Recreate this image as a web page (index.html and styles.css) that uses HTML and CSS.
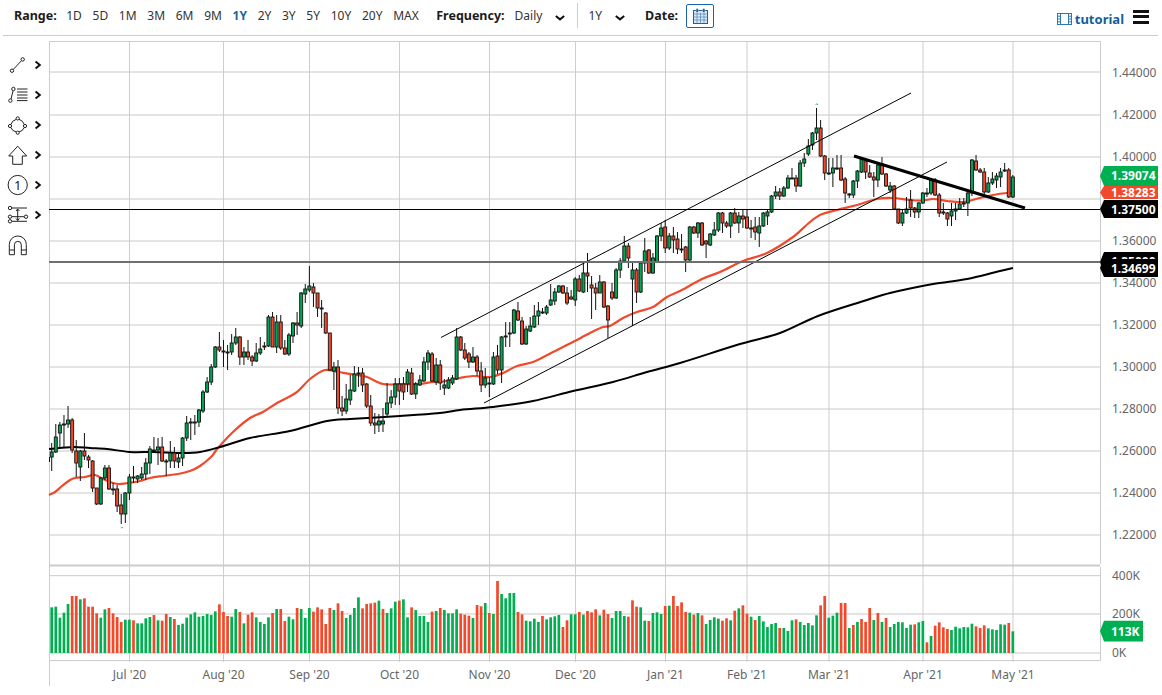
FILE: index.html
```html
<!DOCTYPE html>
<html lang="en">
<head>
<meta charset="utf-8">
<title>Chart</title>
<link rel="stylesheet" href="styles.css">
</head>
<body>
<header class="toolbar">
  <div class="group ranges">
    <span class="label">Range:</span>
    <span class="opt">1D</span><span class="opt">5D</span><span class="opt">1M</span><span class="opt">3M</span><span class="opt">6M</span><span class="opt">9M</span><span class="opt active">1Y</span><span class="opt">2Y</span><span class="opt">3Y</span><span class="opt">5Y</span><span class="opt">10Y</span><span class="opt">20Y</span><span class="opt">MAX</span>
  </div>
  <div class="group freq">
    <span class="label">Frequency:</span>
    <span class="opt">Daily</span>
    <svg class="chev" viewBox="0 0 10 6"><path d="M0.8 1 L5 4.4 L9.2 1"/></svg>
  </div>
  <div class="vsep"></div>
  <div class="group period">
    <span class="opt">1Y</span>
    <svg class="chev" viewBox="0 0 10 6"><path d="M0.8 1 L5 4.4 L9.2 1"/></svg>
  </div>
  <div class="group date">
    <span class="label">Date:</span>
    <button class="calbtn" type="button">
      <svg class="cal" viewBox="0 0 15 16">
        <rect class="calfill" x="0.5" y="2.5" width="14" height="13"/>
        <path class="calgrid" d="M0.5 6H14.5M0.5 9H14.5M0.5 12H14.5M4 5V15.5M7.5 5V15.5M11 5V15.5"/>
        <rect class="calring" x="3" y="0.5" width="2.4" height="4" rx="1"/>
        <rect class="calring" x="9.6" y="0.5" width="2.4" height="4" rx="1"/>
      </svg>
    </button>
  </div>
  <div class="spring"></div>
  <a class="tutorial">
    <svg class="film" viewBox="0 0 15 12">
      <rect x="0.5" y="0.5" width="14" height="11"/>
      <path d="M3.5 0.5V11.5M11.5 0.5V11.5M0.5 3.2H3.5M0.5 6H3.5M0.5 8.8H3.5M11.5 3.2H14.5M11.5 6H14.5M11.5 8.8H14.5"/>
    </svg>
    <span>tutorial</span>
  </a>
  <div class="burger"><i></i><i></i><i></i></div>
</header>

<main class="stage">
  <nav class="rail">
    <div class="tool">
      <svg class="ticon" viewBox="6 53 24 24"><path d="M13.3 69.4L21.4 60.8"/><circle cx="12" cy="70.7" r="1.7"/><circle cx="22.7" cy="59.4" r="1.7"/></svg>
      <svg class="tchev" viewBox="0 0 8 12"><path d="M1.6 2.4L5.8 6L1.6 9.6"/></svg>
    </div>
    <div class="tool">
      <svg class="ticon" viewBox="6 84 24 24"><path d="M13 92L11 100"/><circle cx="13.4" cy="90" r="1.7"/><circle cx="10.4" cy="101.6" r="1.7"/><path d="M17 90H27.5M17 93H27.5M17 96H27.5M17 99H27.5M17 101.6H27.5"/></svg>
      <svg class="tchev" viewBox="0 0 8 12"><path d="M1.6 2.4L5.8 6L1.6 9.6"/></svg>
    </div>
    <div class="tool">
      <svg class="ticon" viewBox="6 113 24 24"><path d="M16.3 119.3Q12 120.5 10.9 124.5M19 119.3Q23 120.5 24.3 124.5M24.3 127.6Q23 131 19 132M16.4 132Q12 131 10.9 127.5"/><circle cx="17.7" cy="118.4" r="1.6"/><circle cx="25" cy="126" r="1.6"/><circle cx="17.7" cy="132.7" r="1.6"/><circle cx="10" cy="126" r="1.6"/></svg>
      <svg class="tchev" viewBox="0 0 8 12"><path d="M1.6 2.4L5.8 6L1.6 9.6"/></svg>
    </div>
    <div class="tool">
      <svg class="ticon" viewBox="6 143 24 24"><path d="M17.7 146.2L26.7 156H22.3V164.3H12.7V156H8.7Z"/></svg>
      <svg class="tchev" viewBox="0 0 8 12"><path d="M1.6 2.4L5.8 6L1.6 9.6"/></svg>
    </div>
    <div class="tool">
      <svg class="ticon" viewBox="6 173 24 24"><circle cx="17.7" cy="185" r="9.6"/><text class="one" x="17.7" y="189.6">1</text></svg>
      <svg class="tchev" viewBox="0 0 8 12"><path d="M1.6 2.4L5.8 6L1.6 9.6"/></svg>
    </div>
    <div class="tool">
      <svg class="ticon" viewBox="6 203 24 24"><path d="M12 208H27M12 216.7H24M12 221.3H27"/><circle cx="10" cy="208" r="1.7"/><circle cx="10" cy="216.7" r="1.7"/><circle cx="10" cy="221.3" r="1.7"/><circle cx="26" cy="216.7" r="1.7"/><path d="M17.7 209V220.5M16 211L17.7 209L19.4 211M16 218.5L17.7 220.5L19.4 218.5"/></svg>
      <svg class="tchev" viewBox="0 0 8 12"><path d="M1.6 2.4L5.8 6L1.6 9.6"/></svg>
    </div>
    <div class="tool">
      <svg class="ticon" viewBox="6 233 24 24"><path d="M9.3 254.7V244.5A8.4 8.4 0 0 1 26.3 244.5V254.7H21.3V244.8A3.4 3.4 0 0 0 14.4 244.8V254.7ZM9.3 250H14.4M21.3 250H26.3"/></svg>
    </div>
  </nav>

  <svg class="chart" viewBox="48 36 1114 659" width="1114" height="659">
    <defs><clipPath id="plot"><rect x="49" y="41" width="1051" height="620"/></clipPath></defs>

    <path class="hgrid" d="M49 72H1100M49 115H1100M49 157H1100M49 199H1100M49 241H1100M49 283H1100M49 325H1100M49 367H1100M49 409H1100M49 451H1100M49 493H1100M49 535H1100M49 575.7H1100M49 614H1100M49 653H1100"/>
    <path class="vgrid" d="M129.5 41V662M223.5 41V662M309.5 41V662M399.5 41V662M489.5 41V662M575.5 41V662M665.5 41V662M747 41V662M829 41V662M923 41V662M1013 41V662"/>
    <path class="axis" d="M49.5 41.5H1100.5V564M1100.5 567V660.5H49M49.5 41.5V686"/>
    <path class="paneSep" d="M49 565.5H1100"/>

    <g id="volumes" clip-path="url(#plot)"></g>

    <path class="ma red" id="maRed"/>
    <path class="ma black" id="maBlack"/>

    <g id="candles" clip-path="url(#plot)"></g>
    <path class="wick" d="M49.5 457V462"/>

    <line class="trend" x1="441" y1="337.5" x2="911" y2="93"/>
    <line class="trend" x1="484" y1="403" x2="947" y2="162"/>
    <line class="trend thick" x1="854" y1="156" x2="1025" y2="208"/>
    <line class="hline" x1="49" y1="209.5" x2="1100" y2="209.5"/>
    <line class="hline gray" x1="49" y1="262" x2="1100" y2="262"/>

    <path class="hilo g" d="M815.6 105L816.8 103.6L818 105"/>
    <path class="hilo r" d="M120.8 527L122 528.2L123.2 527"/>

    <g class="ylabels">
      <text x="1112" y="76.5">1.44000</text>
      <text x="1112" y="119">1.42000</text>
      <text x="1112" y="161">1.40000</text>
      <text x="1112" y="245">1.36000</text>
      <text x="1112" y="287">1.34000</text>
      <text x="1112" y="329">1.32000</text>
      <text x="1112" y="371">1.30000</text>
      <text x="1112" y="413">1.28000</text>
      <text x="1112" y="455">1.26000</text>
      <text x="1112" y="497">1.24000</text>
      <text x="1112" y="539">1.22000</text>
      <text x="1112" y="579.5">400K</text>
      <text x="1112" y="618">200K</text>
      <text x="1112" y="657">0K</text>
    </g>

    <g class="xlabels">
      <text x="129.5" y="679">Jul '20</text>
      <text x="223.5" y="679">Aug '20</text>
      <text x="309.5" y="679">Sep '20</text>
      <text x="399.5" y="679">Oct '20</text>
      <text x="489.5" y="679">Nov '20</text>
      <text x="575.5" y="679">Dec '20</text>
      <text x="665.5" y="679">Jan '21</text>
      <text x="747" y="679">Feb '21</text>
      <text x="829" y="679">Mar '21</text>
      <text x="923" y="679">Apr '21</text>
      <text x="1013" y="679">May '21</text>
    </g>

    <g class="badges">
      <polygon class="bgreen" points="1100,176 1104,166 1158,166 1158,186 1104,186"/>
      <text x="1111" y="180">1.39074</text>
      <polygon class="bred" points="1100,192.5 1104,186 1158,186 1158,199 1104,199"/>
      <text x="1111" y="197">1.38283</text>
      <polygon class="bblack" points="1100,209 1104,200 1158,200 1158,218 1104,218"/>
      <text x="1111" y="213.5">1.37500</text>
      <polygon class="bblack" points="1100,262 1104,252 1158,252 1158,272 1104,272"/>
      <text x="1111" y="265.5">1.35000</text>
      <polygon class="bblack" points="1100,268 1104,259 1158,259 1158,277 1104,277"/>
      <text x="1111" y="272.5">1.34699</text>
      <polygon class="bgreen" points="1100,631 1104,620.7 1143,620.7 1143,641.5 1104,641.5"/>
      <text x="1111" y="635.5">113K</text>
    </g>
  </svg>
</main>
<script src="script.js"></script>
</body>
</html>
```
FILE: styles.css
```css
* { box-sizing: border-box; }
html, body { margin: 0; padding: 0; background: #fff; }
body {
  width: 1162px;
  height: 695px;
  overflow: hidden;
  font-family: "Noto Sans", "Open Sans", sans-serif;
  color: #222;
}
.toolbar {
  display: flex;
  align-items: center;
  height: 36px;
  margin: 0 4px 0 3px;
  padding: 0 9px 4px 11px;
  border-bottom: 1px solid #ccc;
  font-size: 12px;
}
.group { display: flex; align-items: center; }
.ranges { gap: 10.7px; }
.label { font-weight: 700; font-size: 12.5px; color: #1b1b1b; }
.ranges .label { margin-right: -1.2px; }
.opt { color: #333; }
.opt.active { color: #1a66ad; font-weight: 700; }
.freq { margin-left: 17.5px; gap: 10px; }
.freq .chev { margin-left: 3px; }
.vsep { width: 1px; height: 25px; background: #ccc; margin-left: 12px; }
.period { margin-left: 10px; gap: 13px; }
.date { margin-left: 20px; gap: 8px; }
.chev { width: 10px; height: 6px; margin-top: 4px; }
.chev path { fill: none; stroke: #111; stroke-width: 2; }
.calbtn {
  display: flex;
  align-items: center;
  justify-content: center;
  width: 28px;
  height: 24px;
  padding: 0;
  background: #fff;
  border: 1px solid #1a66ad;
  border-radius: 2px;
}
.cal { width: 15px; height: 16px; }
.calfill { fill: #dbe8f4; stroke: #1a5f9e; stroke-width: 1; }
.calgrid { fill: none; stroke: #4c86bb; stroke-width: 0.7; }
.calring { fill: #1a5f9e; stroke: #fff; stroke-width: 0.4; }
.spring { flex: 1; }
.tutorial {
  display: flex;
  align-items: center;
  gap: 3px;
  margin-top: 6px;
  color: #14609a;
  font-weight: 700;
  font-size: 13px;
}
.film { width: 15px; height: 12px; }
.film rect { fill: none; stroke: #2b78b5; stroke-width: 1; }
.film path { fill: none; stroke: #2b78b5; stroke-width: 1; }
.burger { display: flex; flex-direction: column; gap: 2.5px; margin-left: 9px; margin-top: 2px; }
.burger i { display: block; width: 16px; height: 3px; background: #111; }

.stage { display: flex; }
.rail {
  display: flex;
  flex-direction: column;
  width: 48px;
  padding-top: 14px;
  flex: none;
}
.tool {
  display: flex;
  align-items: center;
  gap: 4px;
  height: 30px;
  padding-left: 6px;
}
.ticon { width: 24px; height: 24px; flex: none; }
.ticon path, .ticon circle { fill: none; stroke: #222; stroke-width: 1; }
.tchev { width: 8px; height: 12px; flex: none; }
.tchev path { fill: none; stroke: #111; stroke-width: 2; }
.one { font-size: 13px; fill: #222; text-anchor: middle; }

.chart { display: block; flex: none; }
.hgrid { fill: none; stroke: #c8c8c8; stroke-width: 1; }
.vgrid { fill: none; stroke: #cdcdcd; stroke-width: 1; }
.axis { fill: none; stroke: #ccc; stroke-width: 1; }
.paneSep { fill: none; stroke: #ccc; stroke-width: 2; }
.ma { fill: none; stroke-width: 2; stroke-linejoin: round; }
.ma.red { stroke: #f0492b; stroke-width: 2.2; }
.ma.black { stroke: #000; }
.wick { fill: none; stroke: #111; stroke-width: 1; }
.bodyg { fill: #00a651; stroke: #111; stroke-width: 0.9; }
.bodyr { fill: #f0492b; stroke: #111; stroke-width: 0.9; }
.volg { fill: #00b050; }
.volr { fill: #f4482a; }
.trend { stroke: #000; stroke-width: 1; }
.trend.thick { stroke-width: 3; }
.hline { stroke: #000; stroke-width: 1; }
.hline.gray { stroke: #6f6f6f; stroke-width: 2; }
.hilo { fill: none; stroke-width: 0.8; }
.hilo.g { stroke: #00b050; }
.hilo.r { stroke: #f0492b; }
.ylabels text { font-size: 12px; fill: #666; }
.xlabels text { font-size: 12px; fill: #666; text-anchor: middle; }
.badges text { font-size: 12px; font-weight: 700; fill: #fff; }
.bgreen { fill: #00b050; }
.bred { fill: #f0492b; }
.bblack { fill: #000; }
```
FILE: script.js
```js
var NS = 'http://www.w3.org/2000/svg';
var X0 = 51.7, STEP = 4.09;

var candles = 'g,443,452,457,471 g,424,437,452,453 g,422,425,433,447 g,415,424,425,447 g,406,420,424,428 r,418,420,450,453 r,440,451,463,477 g,450,451,467,481 r,433,451,456,460 r,455,457,460,468 ' +
'r,460,461,488,492 r,488,488,504,505 g,477,478,504,505 g,465,468,478,480 r,465,468,489,490 r,483,489,490,495 r,485,489,506,512 r,494,505,514,524 g,492,493,514,523 g,474,477,493,500 ' +
'g,466,477,478,483 g,475,476,479,483 g,467,474,478,480 g,458,463,474,480 g,446,449,463,474 g,437,450,450,452 g,438,447,450,465 r,437,447,461,462 r,459,461,461,476 g,441,453,461,468 ' +
'r,447,453,461,468 g,453,458,462,468 g,437,438,458,466 g,416,423,438,441 g,418,422,423,440 g,415,422,423,435 g,409,410,422,427 ' +
'g,390,392,411,413 g,377,382,392,393 g,364,367,382,385 g,346,347,367,368 r,332,347,350,352 r,340,351,351,367 g,345,352,352,370 g,334,343,352,355 g,328,337,343,345 ' +
'r,336,337,357,365 g,347,352,357,365 r,340,352,357,360 r,355,357,361,366 g,343,353,361,362 g,337,349,353,355 r,342,346,346,350 g,315,317,346,347 r,312,317,347,347 g,315,322,347,353 ' +
'r,315,322,348,350 r,340,348,354,355 g,333,335,354,356 g,322,323,336,343 r,312,323,325,335 g,292,293,326,328 g,284,289,294,303 g,266,286,290,292 r,283,287,293,307 r,293,293,308,317 ' +
'r,300,308,308,328 r,312,313,333,334 r,333,333,370,371 g,362,367,371,390 r,360,367,408,414 r,396,408,411,416 g,384,399,411,414 g,375,390,400,405 g,366,374,391,392 r,367,373,373,387 ' +
'r,368,373,385,392 r,383,384,406,408 r,395,406,423,426 r,413,423,425,434 g,414,421,425,432 g,408,421,424,432 g,383,403,414,417 g,390,397,403,408 g,378,384,397,405 r,378,384,391,405 ' +
'r,377,384,392,400 g,369,372,384,392 r,368,373,394,395 g,382,384,394,399 g,375,380,385,386 g,357,362,381,382 g,350,353,362,370 r,352,354,381,382 g,358,365,382,385 ' +
'r,360,365,383,390 g,379,385,388,395 g,377,380,388,389 g,375,378,383,385 g,328,337,379,380 r,336,337,350,351 r,343,350,358,360 r,352,354,362,368 g,347,357,362,363 r,355,357,371,376 ' +
'r,362,371,385,392 g,368,378,385,388 r,377,383,384,397 g,352,357,384,385 r,345,356,370,374 g,336,337,370,383 g,322,336,336,347 g,322,333,333,347 g,309,310,333,334 r,302,311,320,321 ' +
'r,317,321,344,345 g,326,329,344,345 g,317,326,331,332 g,305,316,327,328 g,302,311,316,325 g,308,312,312,314 g,305,307,313,315 g,284,300,305,306 g,288,292,301,305 g,285,286,292,293 ' +
'r,285,286,293,294 r,287,293,303,305 r,290,297,299,300 g,277,279,300,306 r,275,279,291,292 g,262,273,292,293 r,253,273,276,292 r,276,285,288,319 r,283,288,293,310 g,275,282,293,293 ' +
'r,281,282,307,308 r,305,306,320,338 r,283,292,298,300 g,268,270,298,299 g,258,261,270,278 g,236,246,261,262 r,243,246,258,268 g,262,270,279,326 r,268,270,292,303 g,262,263,292,293 ' +
'g,238,251,263,272 r,249,250,273,274 g,253,258,273,274 g,235,236,262,263 g,223,228,236,241 r,220,227,248,253 g,233,236,248,250 r,227,236,240,253 r,232,239,249,254 ' +
'g,234,249,249,253 r,246,247,260,272 g,226,227,260,261 r,226,227,233,234 g,222,223,233,238 r,222,223,245,246 r,240,241,244,258 g,233,234,245,246 g,222,230,235,236 g,212,213,230,232 ' +
'r,212,213,223,233 r,221,223,226,228 g,212,213,226,238 r,208,213,223,224 g,212,216,223,233 r,210,216,219,228 r,209,217,228,229 r,220,228,228,238 r,217,227,232,240 g,217,226,233,247 ' +
'g,212,213,226,227 g,210,212,216,225 g,195,196,212,213 g,186,192,196,199 r,188,192,196,200 g,186,188,196,197 g,175,178,188,189 g,168,178,178,178 r,175,178,186,192 g,160,163,186,187 ' +
'g,153,159,163,167 g,139,146,154,156 g,132,133,145,150 g,108,128,133,140 r,120,128,156,157 r,155,156,173,180 g,158,173,173,175 g,158,168,173,187 r,155,168,168,170 r,155,168,180,181 ' +
'r,177,179,193,203 r,193,194,194,198 g,180,181,195,198 g,170,171,181,188 g,157,159,172,173 r,158,161,172,179 r,165,173,177,178 r,172,177,180,197 g,162,165,180,187 r,157,164,174,175 ' +
'r,173,174,186,187 g,182,186,190,193 r,185,186,209,210 r,209,209,223,224 g,210,213,223,226 g,197,209,213,214 r,190,200,208,217 r,207,208,212,218 g,202,203,212,218 g,192,193,203,204 ' +
'g,188,193,194,197 g,178,180,193,195 r,178,180,195,196 r,193,195,213,217 r,203,212,213,215 r,212,213,219,226 g,203,211,216,226 g,203,209,211,220 g,198,204,209,210 g,198,203,204,207 ' +
'g,190,193,203,216 g,159,160,193,196 r,155,161,170,171 r,168,170,172,173 r,168,172,192,194 g,177,183,192,193 g,172,179,183,185 g,173,176,180,188 g,168,172,177,187 g,163,170,171,172 ' +
'r,168,170,197,198 g,175,177,197,198';

var volA = '35g112 47g110 60g143 72g128 85g102 97r78 110r78 122g88 134r85 147r110 159r110 171r130 183g143 195g118 208r114 220r130 232r141 245r156 257g149 269g149 281r151 294g160 306g160 318g145 331g141 343r135 355g151 367r152 380r132 392g141 404r147 416g165 428g161 441g143 453g133 465g127 478g140 490g138 502g132 514g135 527g124 539r103 551r126 563r138 576g140 588g117 600r126 612g160 625r134 637r127 649g142 662g156 674g162 686g142 698r129 711g117 723r117 735r153 747g140 760g148 772r114 784g117 796g144 809g114 821r125 833r112 845r118 858r162 870r114 882g120 895r100 907r123 919g144 931g135 944g114 956g82 968r115 980r102 992r100 1005r98 1017g92 1029r117 1041g129 1054g115 1066g95 1078r92 1090g88 1103g142 1115r112 1127g120 1140g138 1152g138 1164g156 1176r125 1189g123';
var volB = '1r114 13g120 25g130 38g130 50g118 62r131 74r134 87r137 99g144 111r105 124r109 136g99 148r129 160g132 173r33 185g72 197g85 209g69 222g69 234r126 246r133 259g152 271g154 283g146 295g156 308r138 320g148 332g142 344g139 357g135 369r171 381r151 394g133 406g133 418r126 430g134 443r123 455r127 467r118 479g136 492r119 504r132 516g144 528g123 541g123 553g138 565r140 577r91 590r110 602g112 614g152 627r153 639g129 651g127 663g132 676r108 688g107 700r78 713r108 725r97 737r126 749g128 761r134 774g129 786r136 798g162 810g150 823g142 835g146 847r152 859r145 871g151 884r122 896g115 908r106 921r131 933g140 945r150 957g138 970g154 982g171 994g162 1006g159 1019r174 1031g174 1043g183 1056g151 1068r148 1080g156 1092g165 1105g159 1117g166 1129g136 1141r106 1154r78 1166g143 1178g137 1190g128';
var volC = '7g217 19g234 31g224 44r223 56g217 68g213 81r277 93g258 105r227 118r217 130r232 142r237 154g240 167g230 179g235 191g231 204g232 216g221 228r229 240r234 253r226 265g235 277g238 289g240 302g223 314g224 326r219 339g244';
var volD = [['r',603],['r',603],['g',628],['r',625],['g',622],['r',619],['r',622],['r',608],['g',620],['r',613],['g',622],['r',618],['g',627],['g',624],['g',622]];

var redLine = [[49,495],[55,492],[62,486],[70,480],[75,478],[85,477],[95,475],[103,479],[110,482],[118,484],[128,483],[140,481],[150,478],[163,476],[178,474],[190,471],[200,466],[212,456],[217,449],[233,432],[250,418],[263,412],[277,403],[297,392],[310,379],[325,370],[338,372],[357,375],[367,377],[383,384],[400,384],[420,384],[433,382],[440,382],[460,378],[473,376],[490,377],[503,373],[517,366],[533,362],[553,352],[573,342],[590,333],[603,327],[610,326],[623,318],[637,312],[653,307],[667,297],[680,291],[702,279],[720,272],[743,261],[767,253],[793,237],[810,222],[820,215],[837,210],[857,205],[877,199],[893,198],[910,200],[923,200.5],[933,199],[947,201],[963,202],[980,198],[993,195],[1007,193],[1013,193]];
var blackLine = [[49,449],[73,447],[90,448],[107,449],[130,452],[153,452],[183,453],[200,452],[220,447],[250,438],[290,431],[327,421],[350,419],[400,416],[440,413],[460,410],[493,407],[533,401],[573,391],[613,382],[647,372],[680,363],[740,344],[780,333],[818,316],[867,300],[890,293],[933,284],[967,279],[1000,271],[1013,268]];

function smooth(pts) {
  var d = 'M' + pts[0][0] + ' ' + pts[0][1];
  for (var i = 0; i < pts.length - 1; i++) {
    var p0 = pts[Math.max(i - 1, 0)], p1 = pts[i], p2 = pts[i + 1], p3 = pts[Math.min(i + 2, pts.length - 1)];
    var h = (p2[0] - p1[0]);
    var m1 = (p2[1] - p0[1]) / ((p2[0] - p0[0]) || 1);
    var m2 = (p3[1] - p1[1]) / ((p3[0] - p1[0]) || 1);
    d += 'C' + (p1[0] + h / 3) + ' ' + (p1[1] + m1 * h / 3) + ' ' + (p2[0] - h / 3) + ' ' + (p2[1] - m2 * h / 3) + ' ' + p2[0] + ' ' + p2[1];
  }
  return d;
}
document.getElementById('maRed').setAttribute('d', smooth(redLine));
document.getElementById('maBlack').setAttribute('d', smooth(blackLine));

function el(name, attrs, parent) {
  var n = document.createElementNS(NS, name);
  for (var k in attrs) n.setAttribute(k, attrs[k]);
  parent.appendChild(n);
  return n;
}

var cg = document.getElementById('candles');
candles.split(' ').forEach(function (tok, i) {
  var p = tok.split(',');
  var x = X0 + STEP * i;
  var hi = +p[1], top = +p[2], bot = +p[3], lo = +p[4];
  el('line', { 'class': 'wick', x1: x, x2: x, y1: hi, y2: lo }, cg);
  el('rect', { 'class': p[0] === 'g' ? 'bodyg' : 'bodyr', x: x - 1.5, y: top, width: 3, height: Math.max(bot - top, 1) }, cg);
});

var vg = document.getElementById('volumes');
var BASE = 653;
function bar(i, color, y) {
  var x = X0 + STEP * i;
  el('rect', { 'class': color === 'g' ? 'volg' : 'volr', x: x - 1.35, y: y, width: 2.7, height: BASE - y }, vg);
}
function addVols(str, ox, oy) {
  str.split(' ').forEach(function (t) {
    var m = t.match(/^(\d+)([gr])(\d+)$/);
    var xr = ox + m[1] / 3;
    bar(Math.round((xr - X0) / STEP), m[2], oy + m[3] / 3);
  });
}
addVols(volA, 40, 570);
addVols(volB, 440, 570);
volD.forEach(function (v, k) { bar(193 + k, v[0], v[1]); });
addVols(volC, 900, 550);
```
